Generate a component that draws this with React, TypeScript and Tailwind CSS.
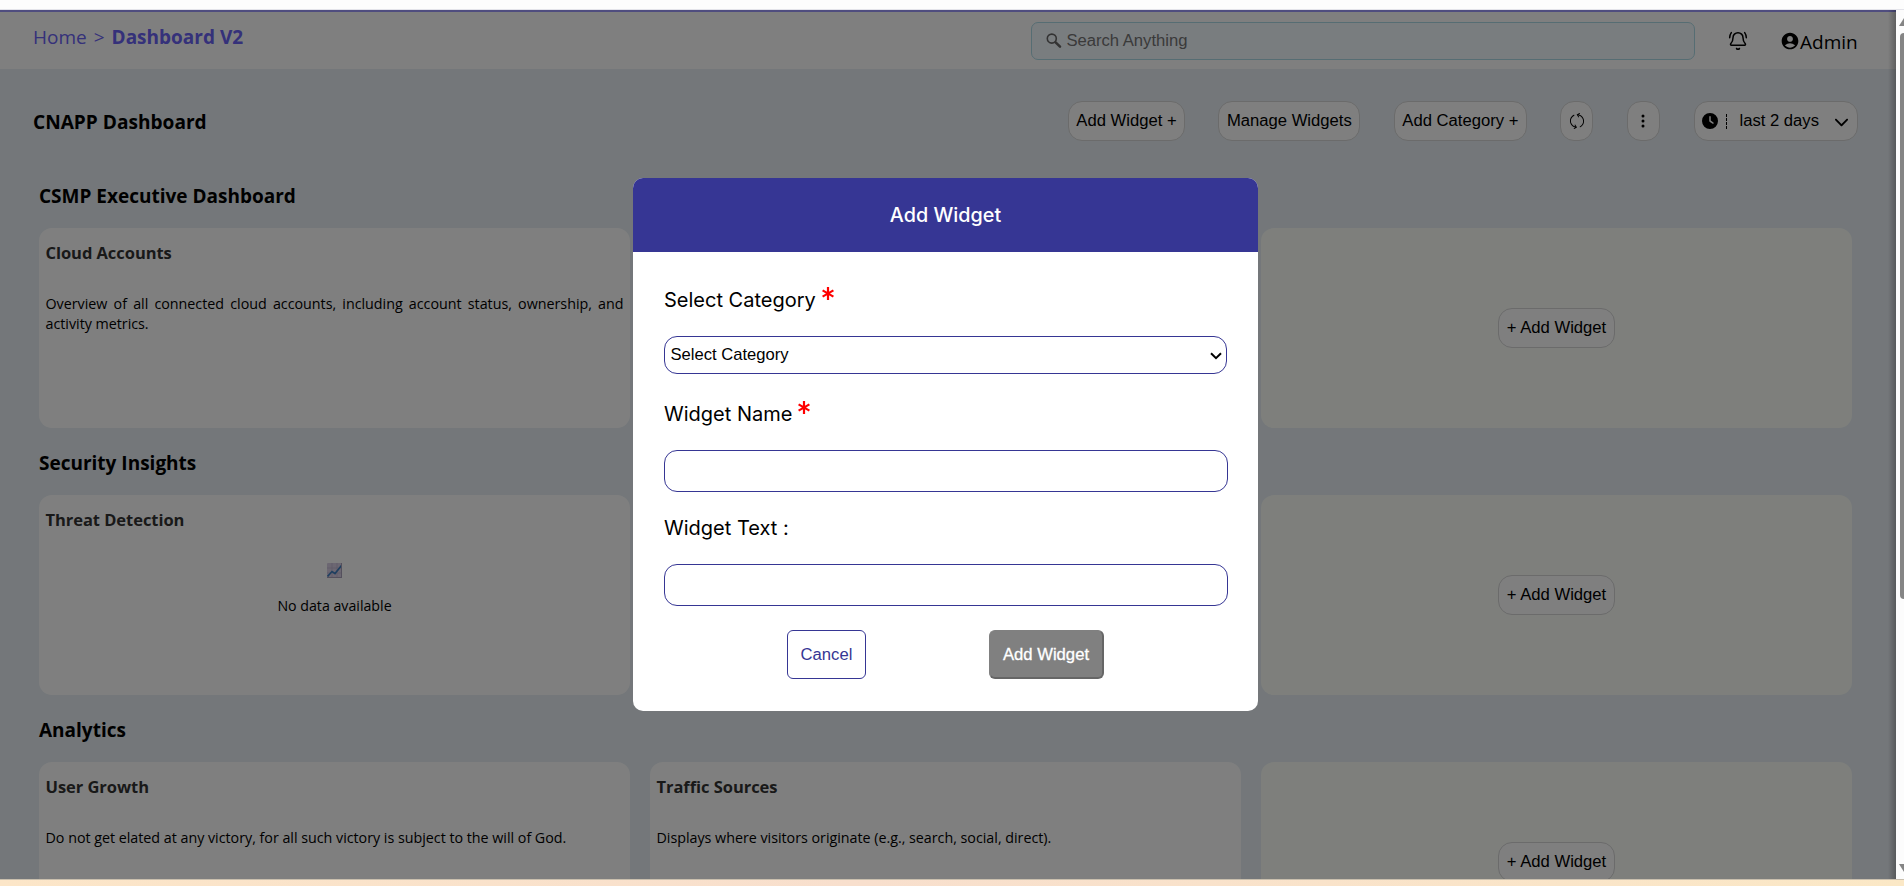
import React from 'react';
import { BellRing } from 'lucide-react';
import { FaChevronDown, FaClock } from 'react-icons/fa6';
import { MdAccountCircle } from 'react-icons/md';
import { BsThreeDotsVertical } from 'react-icons/bs';
import { SlRefresh } from 'react-icons/sl';

const arial = "font-['Liberation_Sans',Arial,sans-serif]";
const pill = `flex h-[40px] shrink-0 items-center justify-center rounded-[14px] border border-[#d6d6d6] bg-white text-[16.65px] leading-none text-black whitespace-nowrap ${arial}`;

function Card({ title, children }: { title?: string; children?: React.ReactNode }) {
  return (
    <div className="h-[200px] rounded-[13px] bg-white px-[6.5px] pt-[13px]">
      {title && <h3 className="text-[16.5px] leading-6 font-bold tracking-[-0.05px] text-[#333]">{title}</h3>}
      {children}
    </div>
  );
}

function CardText({ children }: { children: React.ReactNode }) {
  return <p className="mt-[29px] text-justify text-[14.3px] leading-5 tracking-[-0.02px] text-black">{children}</p>;
}

function EmptyCard() {
  return (
    <div className="flex h-[200px] items-center justify-center rounded-[13px] bg-[#fcfff9]">
      <button className={`${pill} w-[117px]`}>+ Add Widget</button>
    </div>
  );
}

function Section({ title, children }: { title: string; children: React.ReactNode }) {
  return (
    <section className="h-[267.2px] shrink-0">
      <h2 className="h-[52px] pt-[7px] text-[19px] leading-[26px] font-bold text-black">{title}</h2>
      <div className="grid grid-cols-3 gap-x-5">{children}</div>
    </section>
  );
}

function ChartIcon() {
  return (
    <svg width="15" height="15" viewBox="0 0 15 15">
      <rect width="15" height="15" rx="1" fill="#d9cfe4" />
      <path d="M0 5h15M0 10h15M5 0v15M10 0v15" stroke="#bdb2cf" strokeWidth=".7" />
      <path d="M.5 13.5 5 8.5l3 2L14.5 2.5" fill="none" stroke="#3f7fc0" strokeWidth="1.7" />
      <path d="M0 14.5h15M14.5 0v15" stroke="#a9a0bb" strokeWidth="1" />
    </svg>
  );
}

function SearchIcon() {
  return (
    <svg width="16" height="16" viewBox="0 0 16 16" fill="none" stroke="#666" strokeLinecap="round">
      <circle cx="5.8" cy="5.6" r="4.5" strokeWidth="1.6" />
      <path d="M9.6 9.4 14 13.6" strokeWidth="2.6" />
    </svg>
  );
}

function Label({ text, required }: { text: string; required?: boolean }) {
  return (
    <label className="flex h-[30px] text-[20px] leading-[30px] text-black">
      {text}
      {required && <Asterisk />}
    </label>
  );
}

function Asterisk() {
  return (
    <svg className="mt-[2px] ml-[6px]" width="12" height="14" viewBox="0 0 12 14" stroke="#f00" strokeWidth="2.2">
      <path d="M6 0v13M.6 3.4l10.8 6.2M.6 9.6l10.8-6.2" />
    </svg>
  );
}

function Modal() {
  return (
    <div className="absolute top-[178px] left-[633px] flex h-[533px] w-[625px] flex-col overflow-hidden rounded-[10px] bg-white font-['Inter',sans-serif]">
      <div className="flex h-[74px] shrink-0 items-center justify-center bg-[#363694] pt-[2px] text-[19.8px] font-medium text-white">Add Widget</div>
      <div className="flex flex-col px-[31px] pt-[33px]">
        <Label text="Select Category" required />
        <div className={`mt-[21px] flex h-[38px] w-[563px] items-center justify-between rounded-[13px] border border-[#363694] pt-px pr-[4px] pl-[5.5px] text-[16.6px] text-black ${arial}`}>
          Select Category
          <svg width="12" height="8" viewBox="0 0 12 8" fill="none" stroke="#000" strokeWidth="2">
            <path d="M1 1.2 6 6.2l5-5" />
          </svg>
        </div>
        <div className="mt-[25px]"><Label text="Widget Name" required /></div>
        <input className="mt-[21px] h-[42px] w-[564px] rounded-[13px] border border-[#363694] px-2" />
        <div className="mt-[21px]"><Label text="Widget Text :" /></div>
        <input className="mt-[21px] h-[42px] w-[564px] rounded-[13px] border border-[#363694] px-2" />
        <div className={`mt-[24px] flex gap-[123px] pl-[123px] text-[16.65px] ${arial}`}>
          <button className="h-[49px] w-[79px] rounded-[6px] border border-[#363694] pt-px text-[#363694]">Cancel</button>
          <button className="h-[49px] w-[115px] rounded-[6px] border border-r-2 border-b-2 border-[#808080] border-r-[#666] border-b-[#666] bg-[#808080] pt-[2px] text-white [-webkit-text-stroke:0.3px_white]">Add Widget</button>
        </div>
      </div>
    </div>
  );
}

function Scrollbar() {
  return (
    <div className="flex h-[870px] w-2 shrink-0 flex-col bg-[#fcfcfc] pl-[3px]">
      <svg className="mt-[8px]" width="5" height="8" viewBox="0 0 5 8"><path d="M0 8 5 0v8z" fill="#858585" /></svg>
      <div className="mt-[7px] ml-px h-[566px] w-1 rounded-l-[4px] bg-[#858585]" />
      <svg className="mt-[265px]" width="5" height="8" viewBox="0 0 5 8"><path d="M0 0h5v8z" fill="#858585" /></svg>
    </div>
  );
}

export default function App() {
  return (
    <div className="relative flex h-[886px] w-[1904px] flex-col overflow-hidden bg-[#fdfdfd] font-['Open_Sans',sans-serif]">
      <div className="box-content h-[9px] shrink-0 border-b border-[#e4e4ea] bg-[#fdfdfd]" />
      <div className="h-[869px] shrink-0 overflow-hidden">
        <div className="flex">
          <div className="relative flex h-[869px] w-[1896px] flex-col overflow-hidden bg-[#e8eff4]">
            <header className="flex h-[59px] shrink-0 border-t-2 border-[#9f9bff] bg-white pl-[33px]">
              <nav className="flex w-[998px] gap-[7px] pt-[12px] text-[19px] leading-[26px] text-[#6a62f4]">
                <span>Home</span>
                <span>&gt;</span>
                <span className="font-bold">Dashboard V2</span>
              </nav>
              <div className={`mt-[10px] flex h-[38px] w-[664px] items-center gap-[5px] rounded-[7px] border border-[#addbe6] bg-[#f3faff] pl-[13.5px] text-[16.65px] tracking-[-0.02px] text-[#757575] ${arial}`}>
                <SearchIcon />
                Search Anything
              </div>
              <BellRing className="mt-[18.5px] ml-[33px]" size={20} strokeWidth={1.8} color="#000" />
              <div className="mt-[16px] ml-[32px] flex h-[26px] items-center text-[19px] text-black">
                <MdAccountCircle size={20} />
                <span className="pt-[2px]">Admin</span>
              </div>
            </header>

            <div className="flex h-[103px] shrink-0 justify-between pt-[32px] pr-[38px] pl-[33px]">
              <h1 className="pt-[8px] text-[19.1px] leading-[26px] font-bold text-black">CNAPP Dashboard</h1>
              <div className="flex gap-[33.3px]">
                <button className={`${pill} w-[117px]`}>Add Widget +</button>
                <button className={`${pill} w-[142px]`}>Manage Widgets</button>
                <button className={`${pill} w-[133.5px]`}>Add Category +</button>
                <button className={`${pill} w-[33px]`}><SlRefresh size={16} /></button>
                <button className={`${pill} w-[33.5px]`}><BsThreeDotsVertical size={16} /></button>
                <button className={`${pill} w-[164.5px]`}>
                  <FaClock size={16} />
                  <span className="ml-[8px] h-[15px] border-l border-dashed border-black" />
                  <span className="ml-[12px]">last 2 days</span>
                  <FaChevronDown className="ml-[15px]" size={15} />
                </button>
              </div>
            </div>

            <main className="flex flex-col pt-[4px] pr-[44px] pl-[39px]">
              <Section title="CSMP Executive Dashboard">
                <Card title="Cloud Accounts">
                  <CardText>Overview of all connected cloud accounts, including account status, ownership, and activity metrics.</CardText>
                </Card>
                <Card />
                <EmptyCard />
              </Section>
              <Section title="Security Insights">
                <Card title="Threat Detection">
                  <div className="mt-[31px] flex flex-col items-center">
                    <ChartIcon />
                    <p className="mt-[18px] text-[14.2px] leading-5 text-black">No data available</p>
                  </div>
                </Card>
                <Card />
                <EmptyCard />
              </Section>
              <Section title="Analytics">
                <Card title="User Growth">
                  <CardText>Do not get elated at any victory, for all such victory is subject to the will of God.</CardText>
                </Card>
                <Card title="Traffic Sources">
                  <CardText>Displays where visitors originate (e.g., search, social, direct).</CardText>
                </Card>
                <EmptyCard />
              </Section>
            </main>
            <div className="absolute inset-0 bg-black/50" />
            <div className="absolute inset-y-0 right-0 w-[8px] bg-gradient-to-r from-transparent to-black/25" />
          </div>
          <Scrollbar />
        </div>
      </div>
      <div className="h-[7px] shrink-0 border-t border-[#c9bfae] bg-gradient-to-r from-[#fce6c8] via-[#f8dfcd] via-45% to-[#fbe8c6]" />
      <Modal />
    </div>
  );
}
